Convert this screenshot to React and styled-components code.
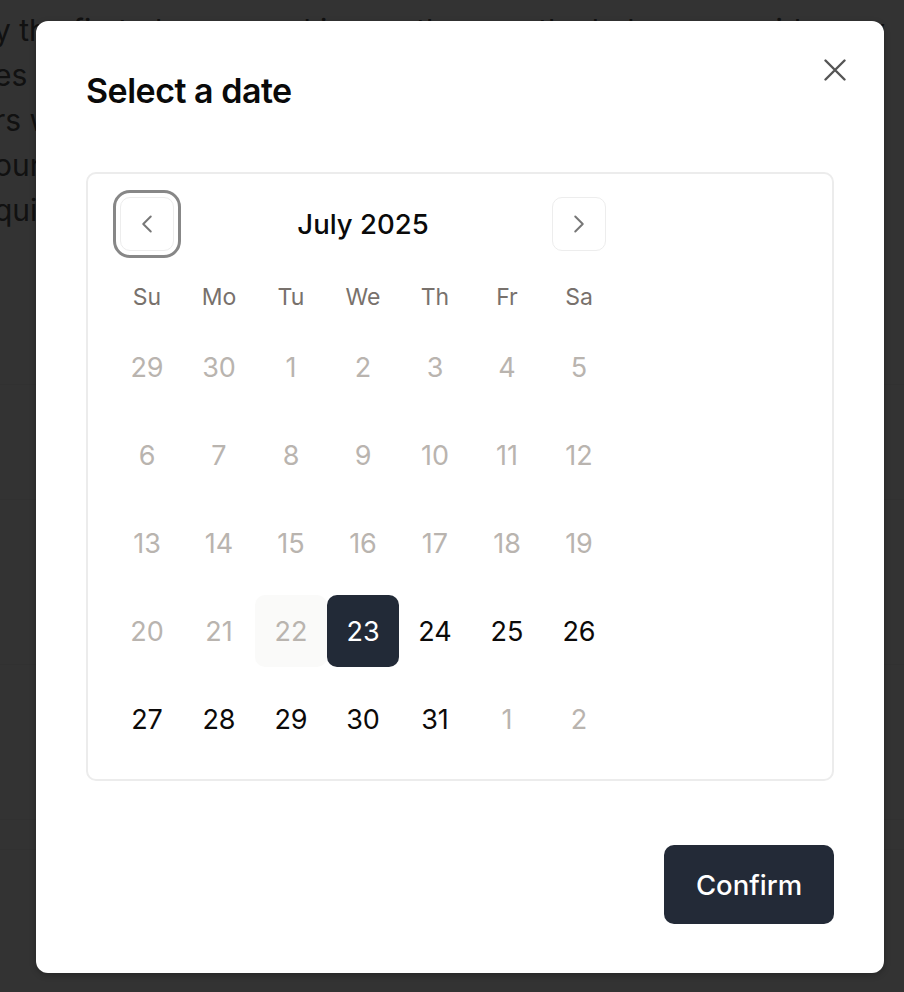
import styled, { createGlobalStyle } from "styled-components";
import { ChevronLeft, ChevronRight } from "lucide-react";

const GlobalStyle = createGlobalStyle`
  html, body {
    margin: 0;
    padding: 0;
    background: #ffffff;
    font-family: Inter, "Noto Sans", sans-serif;
  }
  * {
    box-sizing: border-box;
  }
`;

const Page = styled.div`
  position: relative;
  width: 904px;
  height: 992px;
  overflow: hidden;
  background: #fff;
`;

const Article = styled.div`
  padding: 8px 0 0;
  margin-left: -6px;
  font-family: Inter, sans-serif;
  font-size: 30px;
  line-height: 45px;
  color: #555;
  width: 940px;
  height: 385px;
  border-bottom: 1px solid #f2f2f2;
`;

const Section = styled.div`
  height: ${(p) => p.$h}px;
  background: ${(p) => p.$bg || "#fff"};
  border-bottom: 1px solid #f4f4f4;
`;

const Overlay = styled.div`
  position: absolute;
  inset: 0;
  background: rgba(0, 0, 0, 0.8);
  display: flex;
  align-items: flex-start;
  justify-content: flex-start;
  padding: 21px 0 0 36px;
`;

const Modal = styled.div`
  position: relative;
  width: 848px;
  height: 952px;
  background: #fff;
  border-radius: 12px;
  box-shadow: 0 2px 6px rgba(0, 0, 0, 0.25);
  padding: 50px 50px 49px;
  display: flex;
  flex-direction: column;
`;

const Title = styled.h2`
  margin: 0;
  font-size: 34px;
  line-height: 40px;
  font-weight: 600;
  letter-spacing: -0.5px;
  color: #0a0a0a;
`;

const CloseButton = styled.button`
  position: absolute;
  top: 38px;
  right: 38px;
  width: 22px;
  height: 22px;
  padding: 0;
  border: none;
  background: none;
  color: #555;
  display: flex;
`;

const Calendar = styled.div`
  margin-top: 61px;
  border: 2px solid #ececec;
  border-radius: 10px;
  padding: 23px 23px 24px;
`;

const Inner = styled.div`
  width: 504px;
`;

const Nav = styled.div`
  height: 54px;
  padding: 0 9px;
  display: flex;
  align-items: center;
  justify-content: space-between;
  margin-bottom: 28px;
`;

const NavButton = styled.button`
  width: 54px;
  height: 54px;
  border: 1px solid #ededed;
  border-radius: 10px;
  background: #fff;
  color: #777;
  display: flex;
  align-items: center;
  justify-content: center;
  padding: 0;
  outline: ${(p) => (p.$focused ? "3px solid #878787" : "none")};
  outline-offset: 4px;
`;

const Month = styled.div`
  font-size: 27.5px;
  font-weight: 500;
  color: #0a0a0a;
`;

const Row = styled.div`
  display: grid;
  grid-template-columns: repeat(7, 72px);
  margin-top: ${(p) => p.$mt || 0}px;
`;

const WeekDay = styled.div`
  height: 36px;
  display: flex;
  align-items: center;
  justify-content: center;
  font-size: 23px;
  color: #78716c;
`;

const Day = styled.div`
  height: 72px;
  border-radius: 10px;
  display: flex;
  align-items: center;
  justify-content: center;
  font-size: 27px;
  color: ${(p) =>
    p.$selected ? "#fff" : p.$muted ? "#b9b4af" : "#0c0a09"};
  background: ${(p) =>
    p.$selected ? "#222a37" : p.$today ? "#fafaf9" : "transparent"};
`;

const Footer = styled.div`
  margin-top: auto;
  display: flex;
  justify-content: flex-end;
`;

const Confirm = styled.button`
  width: 170px;
  height: 79px;
  border: none;
  border-radius: 10px;
  background: #232a37;
  color: #fff;
  font-family: Inter, sans-serif;
  font-size: 27.5px;
  font-weight: 500;
`;

const weekDays = ["Su", "Mo", "Tu", "We", "Th", "Fr", "Sa"];

const weeks = [
  [29, 30, 1, 2, 3, 4, 5],
  [6, 7, 8, 9, 10, 11, 12],
  [13, 14, 15, 16, 17, 18, 19],
  [20, 21, 22, 23, 24, 25, 26],
  [27, 28, 29, 30, 31, 1, 2],
];

const lines = [
  "y the first glow or cooking up the sun, the balcony provides a v",
  "es and quiet mornings, a place to linger over coffee or",
  "rs with friends as the light fades across the horizon",
  "ound the corner, a small garden waits in the shade, an",
  "quiet retreat from the city",
];

const App = () => {
  return (
    <Page>
      <GlobalStyle />
      <Article>
        {lines.map((l) => (
          <div key={l}>{l}</div>
        ))}
      </Article>
      <Section $h={115} $bg="#fff" />
      <Section $h={165} $bg="#fcfcfc" />
      <Section $h={155} $bg="#fff" />
      <Section $h={30} $bg="#fdfdfd" />

      <Overlay>
        <Modal>
          <Title>Select a date</Title>
          <CloseButton aria-label="Close">
            <svg width="22" height="22" viewBox="0 0 22 22">
              <path
                d="M1.5 1.5L20.5 20.5M20.5 1.5L1.5 20.5"
                stroke="currentColor"
                strokeWidth="2.4"
                strokeLinecap="round"
              />
            </svg>
          </CloseButton>

          <Calendar>
            <Inner>
              <Nav>
                <NavButton $focused>
                  <ChevronLeft size={30} strokeWidth={1.6} />
                </NavButton>
                <Month>July 2025</Month>
                <NavButton>
                  <ChevronRight size={30} strokeWidth={1.6} />
                </NavButton>
              </Nav>
              <Row>
                {weekDays.map((d) => (
                  <WeekDay key={d}>{d}</WeekDay>
                ))}
              </Row>
              {weeks.map((week, wi) => (
                <Row key={wi} $mt={16}>
                  {week.map((d, di) => {
                    const outside = (wi === 0 && d > 7) || (wi === 4 && d < 7);
                    const past = !outside && d < 23;
                    return (
                      <Day
                        key={di}
                        $muted={outside || past}
                        $today={!outside && d === 22}
                        $selected={!outside && d === 23}
                      >
                        {d}
                      </Day>
                    );
                  })}
                </Row>
              ))}
            </Inner>
          </Calendar>

          <Footer>
            <Confirm>Confirm</Confirm>
          </Footer>
        </Modal>
      </Overlay>
    </Page>
  );
};

export default App;
